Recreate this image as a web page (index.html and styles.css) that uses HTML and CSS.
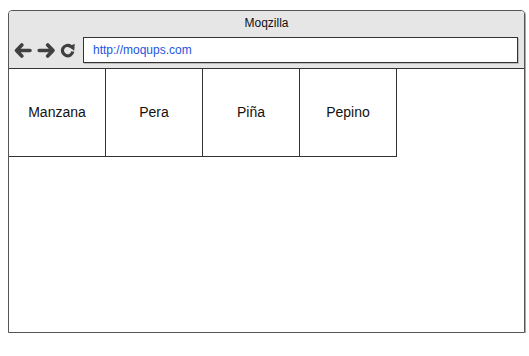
FILE: index.html
```html
<!DOCTYPE html>
<html>
<head>
    <title>Moqzilla</title>
    <link rel="stylesheet" href="styles.css">
</head>
<body>
    <div class="browser">
        <div class="chrome">
            <div class="title">Moqzilla</div>
            <div class="toolbar">
                <div class="nav">
                    <svg width="18" height="15" viewBox="0 0 18 15">
                        <path d="M7.8 2 L2.5 7.5 L7.8 13 M2.5 7.5 H16" fill="none" stroke="#404040" stroke-width="3.6" stroke-linecap="round" stroke-linejoin="round"/>
                    </svg>
                    <svg width="18" height="15" viewBox="0 0 18 15">
                        <path d="M10.7 2 L16 7.5 L10.7 13 M16 7.5 H2.2" fill="none" stroke="#404040" stroke-width="3.6" stroke-linecap="round" stroke-linejoin="round"/>
                    </svg>
                    <svg width="16" height="15" viewBox="0 0 16 15">
                        <path d="M12.8 8.5 A5.2 5.2 0 1 1 10.9 3.5" fill="none" stroke="#404040" stroke-width="3.2"/>
                        <path d="M8 3.2 L14.8 1 L14.2 7.8 Z" fill="#404040"/>
                    </svg>
                </div>
                <div class="address">http://moqups.com</div>
            </div>
        </div>
        <div class="tabs">
            <div class="tab">Manzana</div>
            <div class="tab">Pera</div>
            <div class="tab">Piña</div>
            <div class="tab">Pepino</div>
        </div>
    </div>
</body>
</html>
```

FILE: styles.css
```css
body {
    margin: 0;
    font-family: "Liberation Sans", Arial, sans-serif;
    background: #fff;
}

.browser {
    margin: 10px 0 0 8px;
    width: 515px;
    height: 321px;
    border: 1px solid #555;
    border-radius: 4px 4px 0 0;
    box-shadow: 1px 1px 0 #aaa;
}

.chrome {
    height: 57px;
    background-color: #e6e6e6;
    border-bottom: 1px solid #333;
    border-radius: 3px 3px 0 0;
}

.title {
    text-align: center;
    font-size: 12px;
    color: #111;
    padding-top: 5px;
    height: 21px;
}

.toolbar {
    display: flex;
    align-items: center;
    padding: 0 6px 0 5px;
}

.nav {
    display: flex;
    align-items: center;
    gap: 5px;
    width: 69px;
    padding-top: 1px;
}

.nav svg {
    display: block;
}

.address {
    flex: 1;
    height: 24px;
    line-height: 24px;
    background: #fff;
    border: 1px solid #333;
    box-shadow: 1px 1px 0 #bbb;
    padding-left: 9px;
    font-size: 12px;
    color: #2255dd;
}

.tabs {
    display: flex;
}

.tab {
    width: 96px;
    height: 86px;
    padding-bottom: 1px;
    border-right: 1px solid #333;
    border-bottom: 1px solid #333;
    display: flex;
    align-items: center;
    justify-content: center;
    font-size: 14px;
    color: #111;
}
```
